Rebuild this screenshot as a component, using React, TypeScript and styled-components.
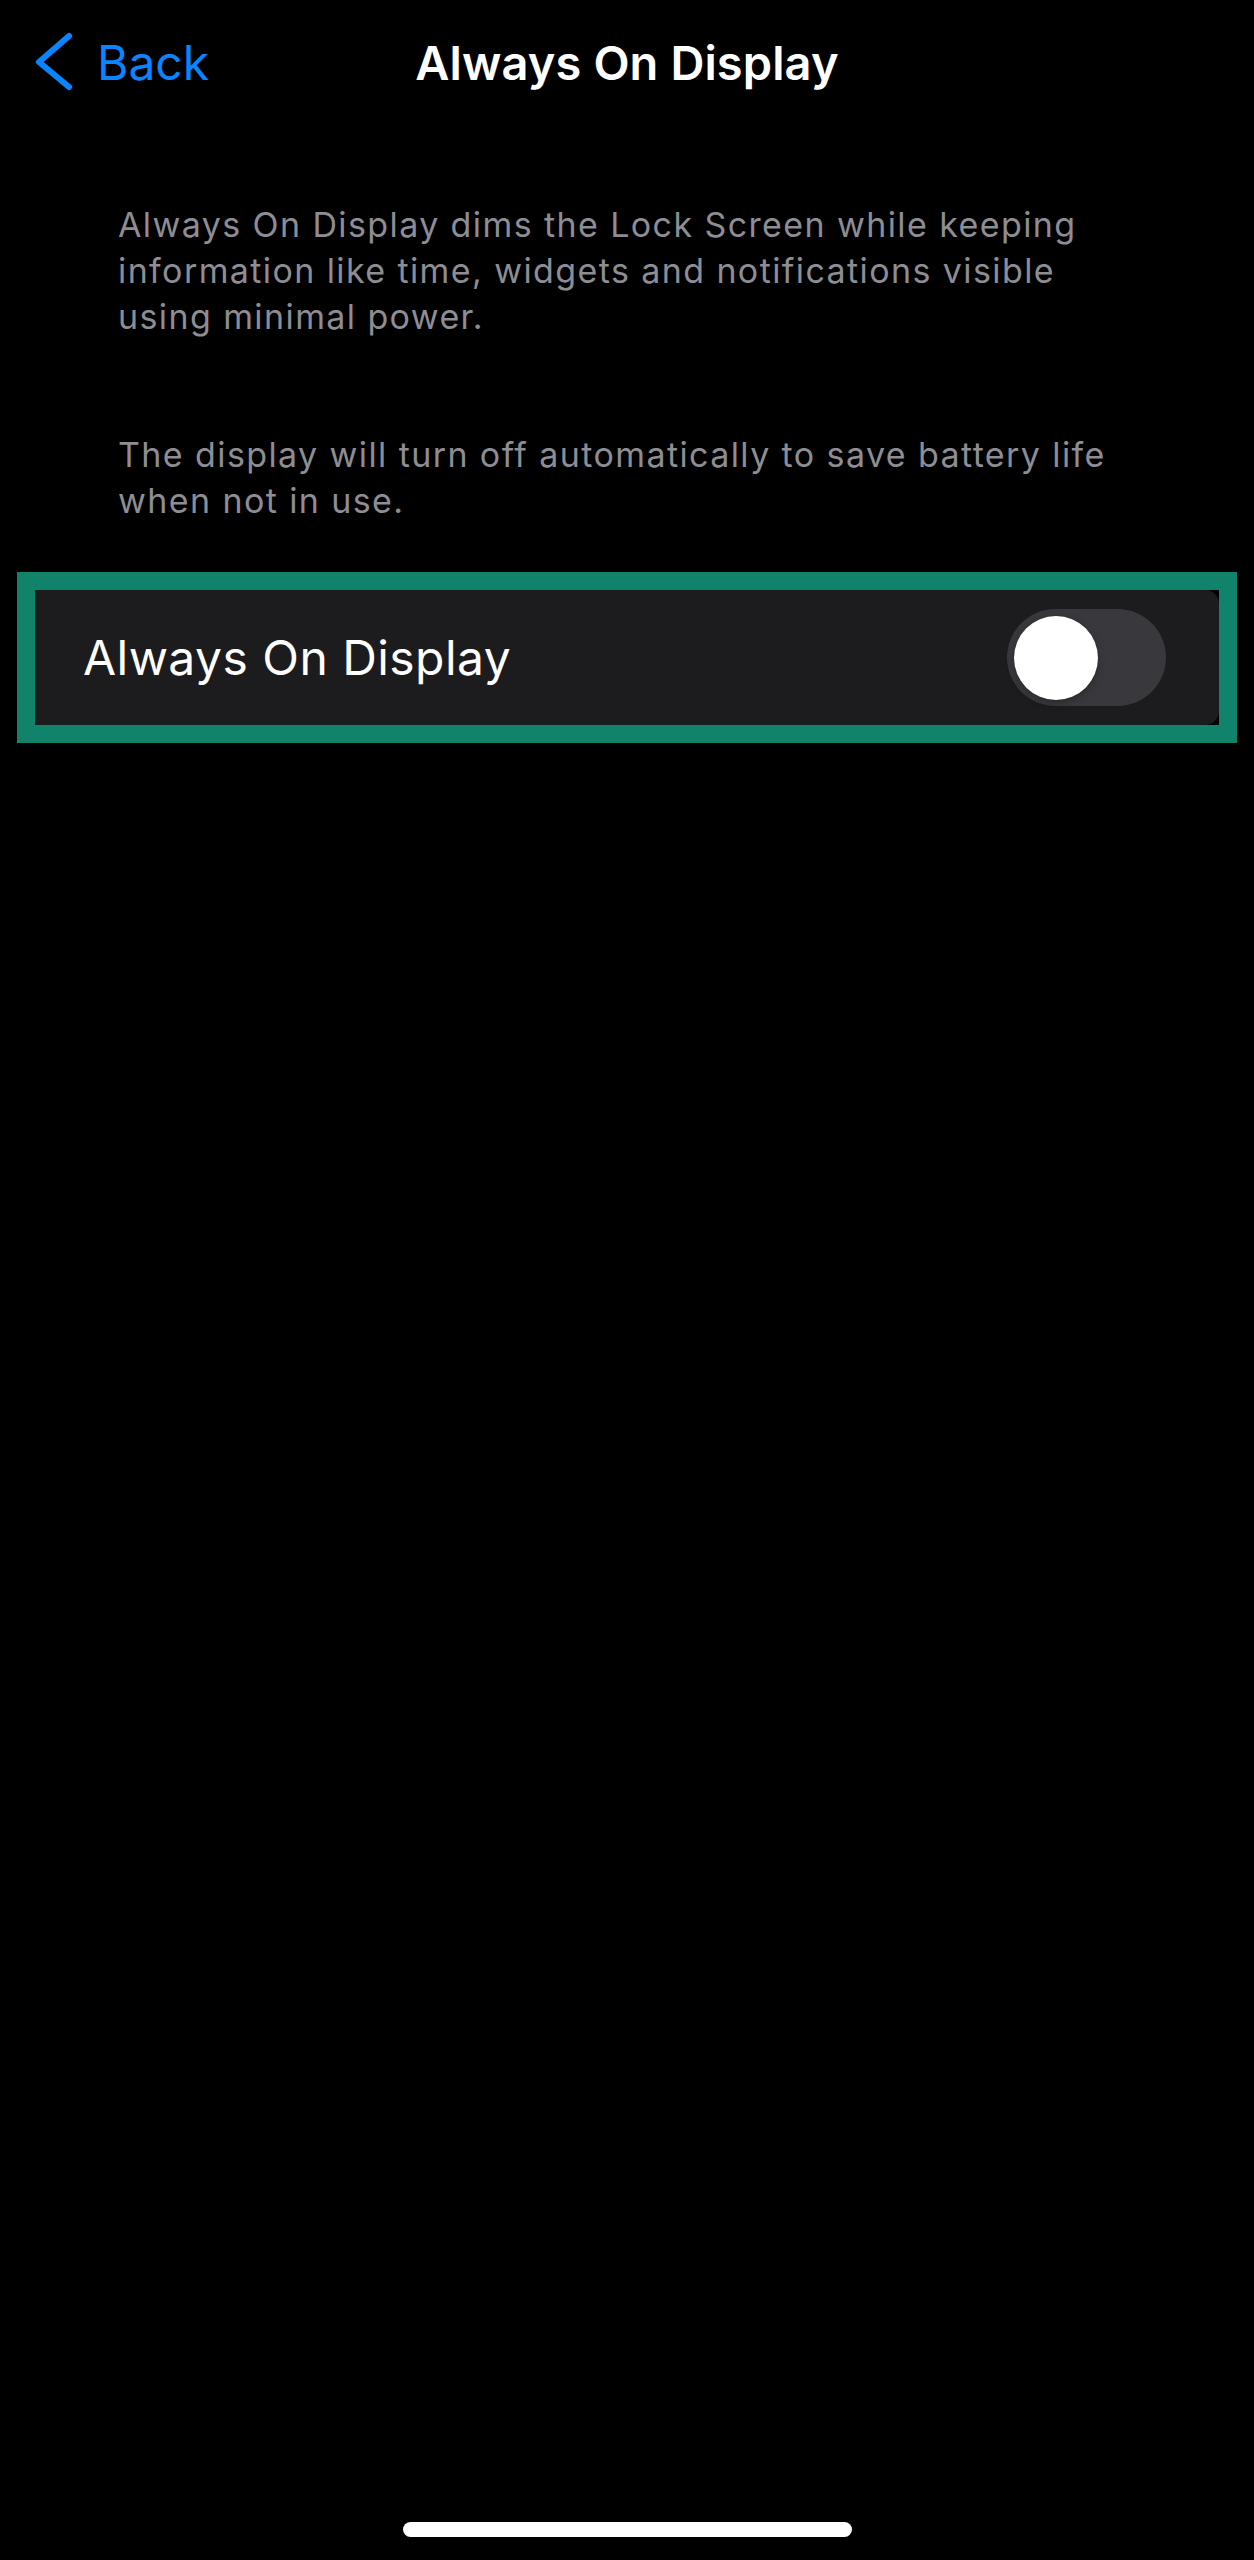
import styled, { createGlobalStyle } from 'styled-components';
import { useState } from 'react';

const GlobalStyle = createGlobalStyle`
  html, body {
    margin: 0;
    padding: 0;
    background: #000;
  }
  * {
    box-sizing: border-box;
  }
`;

const Screen = styled.div`
  display: flex;
  flex-direction: column;
  min-height: 2560px;
  background: #000;
  font-family: Inter, "Noto Sans", "Liberation Sans", sans-serif;
  -webkit-font-smoothing: antialiased;
`;

const NavBar = styled.header`
  display: grid;
  grid-template-columns: 1fr auto 1fr;
  align-items: center;
  height: 124px;
`;

const BackButton = styled.button`
  display: flex;
  align-items: center;
  gap: 22px;
  justify-self: start;
  padding: 0 0 0 33px;
  border: none;
  background: none;
  color: #0a84ff;
  font-family: inherit;
  font-size: 48px;
  font-weight: 400;
  cursor: pointer;
`;

const Title = styled.h1`
  margin: 0;
  color: #fff;
  font-size: 47px;
  font-weight: 600;
  letter-spacing: 0.1px;
`;

const Notes = styled.section`
  display: flex;
  flex-direction: column;
  gap: 92px;
  padding: 78px 118px 0;
`;

const Note = styled.p`
  margin: 0;
  color: #8d8d93;
  font-size: 34px;
  line-height: 46px;
  letter-spacing: 1.4px;
`;

const Highlight = styled.div`
  margin: 48px 17px 0;
  border: 18px solid #10836a;
`;

const Cell = styled.div`
  display: flex;
  align-items: center;
  justify-content: space-between;
  height: 135px;
  padding: 0 53px 0 48px;
  background: #1c1c1e;
  border-radius: 0 14px 14px 0;
`;

const CellLabel = styled.span`
  color: #fff;
  font-size: 48px;
  font-weight: 400;
  letter-spacing: 0.45px;
`;

const Track = styled.button<{ $on: boolean }>`
  display: flex;
  align-items: center;
  justify-content: ${(p) => (p.$on ? 'flex-end' : 'flex-start')};
  width: 159px;
  height: 97px;
  padding: 0 7px;
  border: none;
  border-radius: 49px;
  background: ${(p) => (p.$on ? '#30d158' : '#39393d')};
  cursor: pointer;
`;

const Knob = styled.span`
  width: 84px;
  height: 84px;
  border-radius: 50%;
  background: #fff;
  box-shadow: 0 3px 8px rgba(0, 0, 0, 0.25), 0 0 1px rgba(0, 0, 0, 0.3);
`;

const HomeIndicator = styled.div`
  align-self: center;
  width: 449px;
  height: 15px;
  margin: auto 0 23px;
  border-radius: 8px;
  background: #fff;
`;

function Chevron() {
  return (
    <svg width="42" height="62" viewBox="0 0 42 62" fill="none">
      <polyline
        points="36,5 6,31 36,56"
        stroke="#0a84ff"
        strokeWidth="6"
        strokeLinecap="round"
        strokeLinejoin="round"
      />
    </svg>
  );
}

export default function App() {
  const [alwaysOn, setAlwaysOn] = useState(false);

  return (
    <>
      <GlobalStyle />
      <Screen>
        <NavBar>
          <BackButton type="button">
            <Chevron />
            Back
          </BackButton>
          <Title>Always On Display</Title>
          <div />
        </NavBar>

        <Notes>
          <Note>
            Always On Display dims the Lock Screen while keeping information like time, widgets and
            notifications visible using minimal power.
          </Note>
          <Note>The display will turn off automatically to save battery life when not in use.</Note>
        </Notes>

        <Highlight>
          <Cell>
            <CellLabel>Always On Display</CellLabel>
            <Track type="button" $on={alwaysOn} onClick={() => setAlwaysOn(!alwaysOn)}>
              <Knob />
            </Track>
          </Cell>
        </Highlight>

        <HomeIndicator />
      </Screen>
    </>
  );
}
